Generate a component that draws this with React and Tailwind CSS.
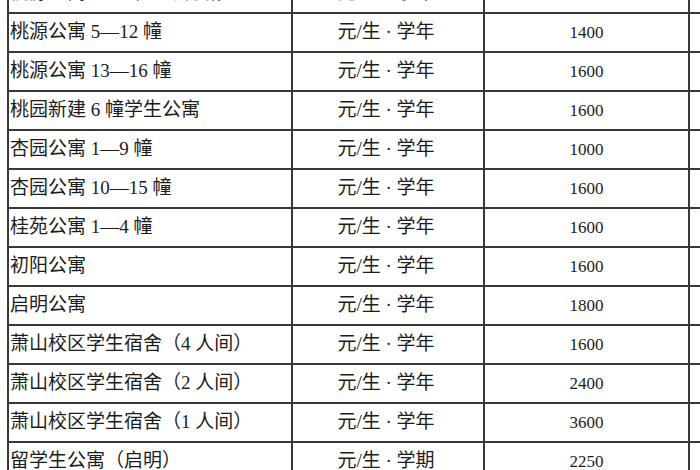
const rows = [
  ["桃源公寓 1—4 幢（新装修）", "元/生 · 学年", "1200"],
  ["桃源公寓 5—12 幢", "元/生 · 学年", "1400"],
  ["桃源公寓 13—16 幢", "元/生 · 学年", "1600"],
  ["桃园新建 6 幢学生公寓", "元/生 · 学年", "1600"],
  ["杏园公寓 1—9 幢", "元/生 · 学年", "1000"],
  ["杏园公寓 10—15 幢", "元/生 · 学年", "1600"],
  ["桂苑公寓 1—4 幢", "元/生 · 学年", "1600"],
  ["初阳公寓", "元/生 · 学年", "1600"],
  ["启明公寓", "元/生 · 学年", "1800"],
  ["萧山校区学生宿舍（4 人间）", "元/生 · 学年", "1600"],
  ["萧山校区学生宿舍（2 人间）", "元/生 · 学年", "2400"],
  ["萧山校区学生宿舍（1 人间）", "元/生 · 学年", "3600"],
  ["留学生公寓（启明）", "元/生 · 学期", "2250"],
];

const cjk = { fontFamily: '"Liberation Serif", "Noto Sans CJK SC", serif' };

export default function App() {
  return (
    <div className="w-[700px] h-[470px] overflow-hidden bg-white text-[#1c1c1c]">
      <div className="-mt-[25px] pl-[7px]">
        {rows.map((r, i) => (
          <div key={i} className="flex h-[39px] border-b-2 border-[#383838]">
            <div
              className="w-[286px] flex items-center border-l-2 border-r-2 border-[#383838] pl-[1px] text-[19px] whitespace-nowrap"
              style={cjk}
            >
              {r[0]}
            </div>
            <div
              className="w-[192px] flex items-center justify-center border-r-2 border-[#383838] pr-[4px] text-[19px] whitespace-nowrap"
              style={cjk}
            >
              {r[1]}
            </div>
            <div
              className="w-[205px] flex items-center justify-center border-r-2 border-[#383838] text-[17px]"
              style={cjk}
            >
              {r[2]}
            </div>
          </div>
        ))}
      </div>
    </div>
  );
}
